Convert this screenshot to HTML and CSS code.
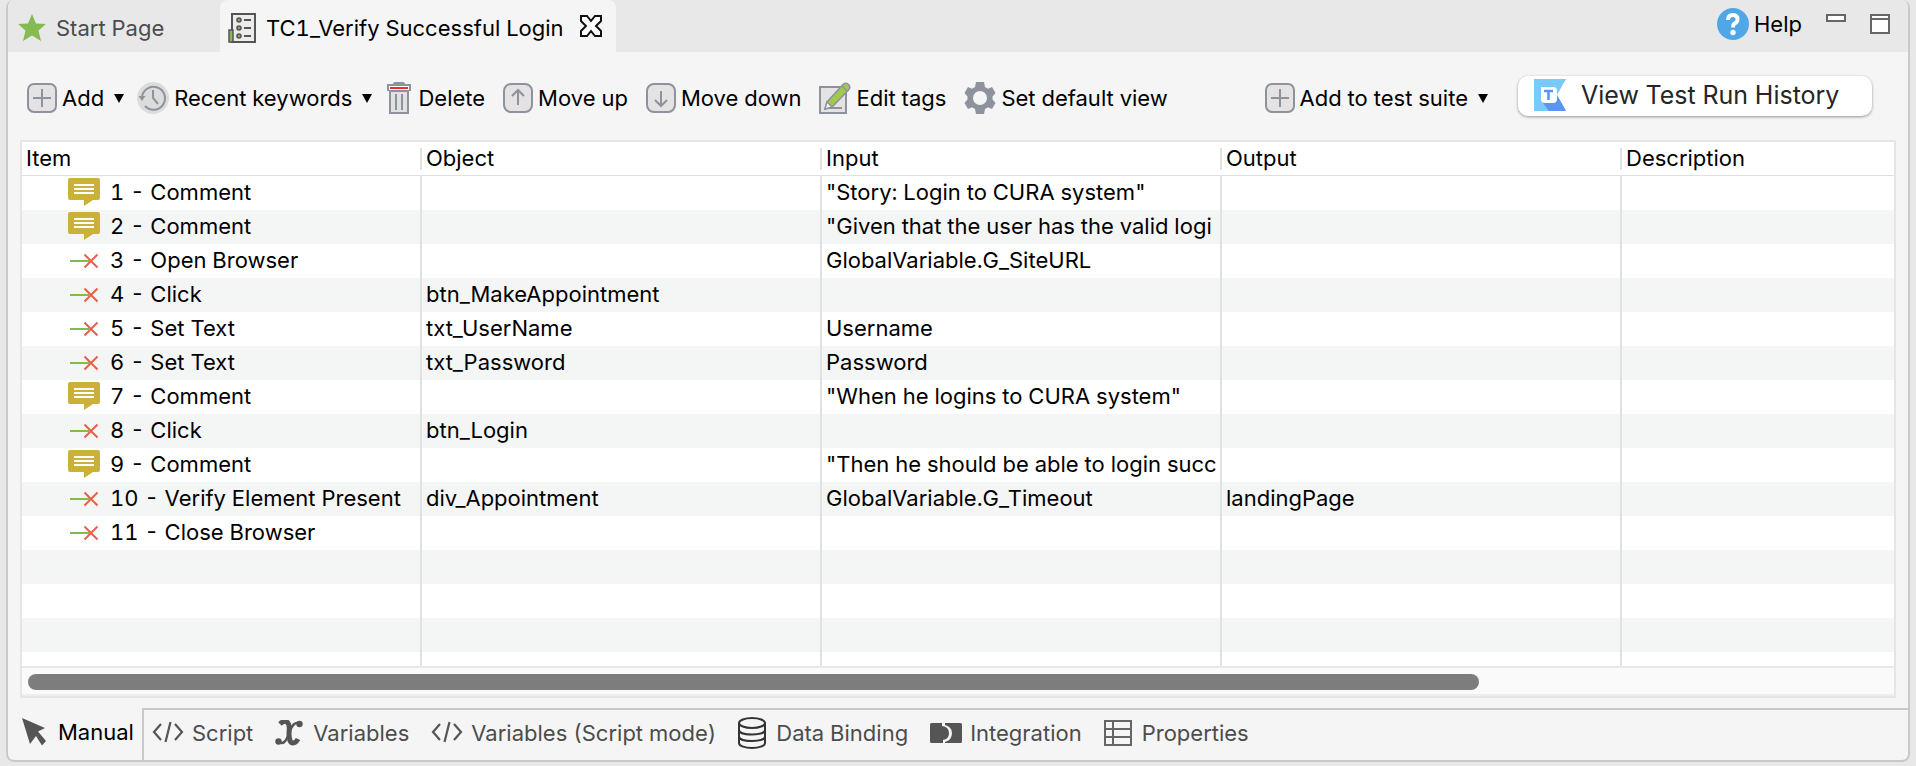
FILE: index.html
```html
<!DOCTYPE html>
<html lang="en">
<head>
<meta charset="utf-8">
<title>TC1_Verify Successful Login</title>
<link rel="stylesheet" href="styles.css">
</head>
<body>
<svg width="0" height="0" class="sprite" aria-hidden="true">
  <symbol id="i-comment" viewBox="0 0 32 28"><path d="M2 0H30Q32 0 32 2V20Q32 22 30 22H25L16 28V22H2Q0 22 0 20V2Q0 0 2 0Z" fill="#cbb039"/><path d="M6 7H26M6 11H26M6 15H26" stroke="#fff" stroke-width="2"/></symbol>
  <symbol id="i-step" viewBox="0 0 32 28"><path d="M2 15H21" stroke="#84bb4f" stroke-width="2"/><path d="M16.500 8.500L29.500 21.500M29.500 8.500L16.500 21.500" stroke="#e8604c" stroke-width="2"/></symbol>
  <symbol id="i-plus" viewBox="0 0 30 30"><rect x="1" y="1" width="28" height="28" rx="6" fill="#e4e2e3" stroke="#8e929d" stroke-width="2"/><path d="M6 15H24M15 6V24" stroke="#8e929d" stroke-width="2"/></symbol>
  <symbol id="i-code" viewBox="0 0 32 24"><path d="M9 3L2 11L9 19M23 3L30 11L23 19M18.500 1L13.500 21" fill="none" stroke="#555" stroke-width="2.200"/></symbol>
</svg>
<main class="editor">
  <header class="tabs">
    <button class="tab tab-start">
      <svg width="28" height="28" viewBox="0 0 28 28"><path d="M14 0L18 9.500L28 10L20.500 16.500L23 27L14 21.500L5 27L7.500 16.500L0 10L10 9.500Z" fill="#86bb51"/></svg>
      <span>Start Page</span>
    </button>
    <button class="tab tab-active">
      <svg width="28" height="30" viewBox="0 0 28 30"><path d="M4 1H27V29H4Z" fill="#ececec" stroke="#555" stroke-width="2"/><path d="M1 17H5V29H1Z" fill="#86bb51" stroke="#555" stroke-width="1.500"/><g fill="#84ad5c" stroke="#555" stroke-width="1.600"><circle cx="11" cy="7" r="2"/><circle cx="11" cy="15" r="2"/><circle cx="11" cy="23" r="2"/></g><path d="M16 7H23M16 15H23M16 23H23" stroke="#555" stroke-width="2"/></svg>
      <span>TC1_Verify Successful Login</span>
      <svg class="close" width="22" height="22" viewBox="0 0 22 22"><path d="M1 1H7L11 6L15 1H21V6L16 11L21 16V21H15L11 16L7 21H1V16L6 11L1 6Z" fill="#fff" stroke="#111" stroke-width="2"/></svg>
    </button>
    <div class="window-tools">
      <button class="tool help"><svg width="32" height="32" viewBox="0 0 32 32"><circle cx="16" cy="16" r="16" fill="#4fa7e8"/><path d="M11 12Q11 7 16 7Q20.500 7 20.500 11.500Q20.500 14 17.500 15.500Q16 16.500 16 19.500" fill="none" stroke="#fff" stroke-width="4"/><circle cx="16" cy="24.500" r="2.700" fill="#fff"/></svg>Help</button>
      <button class="tool" aria-label="Minimize"><svg width="20" height="20" viewBox="0 0 20 20"><rect x="1" y="1" width="18" height="6" fill="#fff" stroke="#666" stroke-width="2"/></svg></button>
      <button class="tool" aria-label="Maximize"><svg width="20" height="20" viewBox="0 0 20 20"><path d="M1 1H19V19H1ZM1 5H19" fill="#fff" stroke="#666" stroke-width="2"/></svg></button>
    </div>
  </header>
  <nav class="toolbar" aria-label="Test case">
    <button class="tool"><svg width="30" height="30"><use href="#i-plus"/></svg>Add<i class="caret"></i></button>
    <button class="tool"><svg width="32" height="32" viewBox="0 0 32 32"><circle cx="16" cy="16" r="16" fill="#dcdcdc"/><path d="M5 16A11.500 11.500 0 1 1 8 24" fill="none" stroke="#8e929d" stroke-width="2"/><path d="M1.500 14H8.500L5 19Z" fill="#8e929d"/><path d="M16 8V16L21 22" fill="none" stroke="#8e929d" stroke-width="2"/></svg>Recent keywords<i class="caret"></i></button>
    <button class="tool action"><svg width="28" height="32" viewBox="-2 0 28 32"><path d="M6 2Q6 0 8 0H16Q18 0 18 2H24V9H0V2Z" fill="#8e929d"/><rect x="2" y="4" width="20" height="4" fill="#fff"/><rect x="3" y="5" width="18" height="2" fill="#ee2c2c"/><path d="M3 9H21V31H3Z" fill="#e2e1e2" stroke="#8e929d" stroke-width="2"/><path d="M9 12V28M15 12V28" stroke="#8e929d" stroke-width="2"/></svg>Delete</button>
    <button class="tool action"><svg width="30" height="30" viewBox="0 0 30 30"><rect x="1" y="1" width="28" height="28" rx="7" fill="#e4e2e3" stroke="#8e929d" stroke-width="2"/><path d="M15 22V7M9 13L15 7L21 13" fill="none" stroke="#8e929d" stroke-width="2"/></svg>Move up</button>
    <button class="tool action"><svg width="30" height="30" viewBox="0 0 30 30"><rect x="1" y="1" width="28" height="28" rx="7" fill="#e4e2e3" stroke="#8e929d" stroke-width="2"/><path d="M15 8V23M9 17L15 23L21 17" fill="none" stroke="#8e929d" stroke-width="2"/></svg>Move down</button>
    <button class="tool action"><svg width="32" height="32" viewBox="0 0 32 32"><path d="M1 5H27V31H1Z" fill="#e4e2e3" stroke="#8e929d" stroke-width="2"/><path d="M6 26H23" stroke="#8e929d" stroke-width="2"/><path d="M8 20L24 2.500Q27 0 29.500 2.500Q32 5 29.500 8L13 25L6 27Z" fill="#a2c94e" stroke="#8e929d" stroke-width="1.600"/><path d="M8 20L13 25L6 27Z" fill="#fff" stroke="#8e929d" stroke-width="1.400"/><path d="M23 4L28 9" stroke="#8e929d" stroke-width="1.600"/></svg>Edit tags</button>
    <button class="tool action"><svg width="32" height="32" viewBox="0 0 32 32"><path fill-rule="evenodd" fill="#8e929d" d="M12 0H20L21 5L24 6.800L28 5L31.500 11L28.500 14.500V17.500L31.500 21L28 27L24 25.200L21 27L20 32H12L11 27L8 25.200L4 27L0.500 21L3.500 17.500V14.500L0.500 11L4 5L8 6.800L11 5ZM16 9A7 7 0 1 0 16 23A7 7 0 1 0 16 9Z"/></svg>Set default view</button>
    <button class="tool tool-suite"><svg width="30" height="30"><use href="#i-plus"/></svg>Add to test suite<i class="caret"></i></button>
    <button class="history"><svg width="32" height="32" viewBox="0 0 32 32"><path d="M0 0H32L23 16L32 32H0Z" fill="#78cafa"/><path d="M9 24L23 16L32 32H15Z" fill="#5b93f7"/><path d="M7 8H19Q23 8 23 12V20Q23 24 19 24H11Q7 24 7 20Z" fill="#fff"/><path d="M10 12H19M14.500 12V21" stroke="#5b93f7" stroke-width="2.600"/></svg>View Test Run History</button>
  </nav>
  <section class="grid">
    <div class="viewport">
      <table>
        <colgroup><col class="c-item"><col class="c-mid"><col class="c-mid"><col class="c-mid"><col></colgroup>
        <thead><tr><th>Item</th><th>Object</th><th>Input</th><th>Output</th><th>Description</th></tr></thead>
        <tbody>
          <tr><td class="item"><svg><use href="#i-comment"/></svg>1 - Comment</td><td></td><td>"Story: Login to CURA system"</td><td></td><td></td></tr>
          <tr><td class="item"><svg><use href="#i-comment"/></svg>2 - Comment</td><td></td><td>"Given that the user has the valid logi</td><td></td><td></td></tr>
          <tr><td class="item"><svg><use href="#i-step"/></svg>3 - Open Browser</td><td></td><td>GlobalVariable.G_SiteURL</td><td></td><td></td></tr>
          <tr><td class="item"><svg><use href="#i-step"/></svg>4 - Click</td><td>btn_MakeAppointment</td><td></td><td></td><td></td></tr>
          <tr><td class="item"><svg><use href="#i-step"/></svg>5 - Set Text</td><td>txt_UserName</td><td>Username</td><td></td><td></td></tr>
          <tr><td class="item"><svg><use href="#i-step"/></svg>6 - Set Text</td><td>txt_Password</td><td>Password</td><td></td><td></td></tr>
          <tr><td class="item"><svg><use href="#i-comment"/></svg>7 - Comment</td><td></td><td>"When he logins to CURA system"</td><td></td><td></td></tr>
          <tr><td class="item"><svg><use href="#i-step"/></svg>8 - Click</td><td>btn_Login</td><td></td><td></td><td></td></tr>
          <tr><td class="item"><svg><use href="#i-comment"/></svg>9 - Comment</td><td></td><td>"Then he should be able to login succ</td><td></td><td></td></tr>
          <tr><td class="item"><svg><use href="#i-step"/></svg>10 - Verify Element Present</td><td>div_Appointment</td><td>GlobalVariable.G_Timeout</td><td>landingPage</td><td></td></tr>
          <tr><td class="item"><svg><use href="#i-step"/></svg>11 - Close Browser</td><td></td><td></td><td></td><td></td></tr>
          <tr><td></td><td></td><td></td><td></td><td></td></tr>
          <tr><td></td><td></td><td></td><td></td><td></td></tr>
          <tr><td></td><td></td><td></td><td></td><td></td></tr>
          <tr><td></td><td></td><td></td><td></td><td></td></tr>
        </tbody>
      </table>
    </div>
    <div class="scrollbar"><div class="thumb"></div></div>
  </section>
  <footer class="views">
    <button class="view view-active"><svg width="26" height="30" viewBox="0 0 26 30"><path d="M0 1L23 11L16 14.500L24 24L20 28.500L14 19L8 27Z" fill="#555"/></svg>Manual</button>
    <div class="view-list">
      <button class="view"><svg class="wide" width="32" height="24"><use href="#i-code"/></svg>Script</button>
      <button class="view"><svg width="28" height="26" viewBox="0 0 28 26"><path d="M5 4Q9 0 12 2Q15 4 14 13Q14 23 18 23Q21 23 23 19" fill="none" stroke="#555" stroke-width="5"/><path d="M24 4Q19 0 14 13Q10 26 4 22" fill="none" stroke="#555" stroke-width="2.500"/><circle cx="24.500" cy="4" r="3.200" fill="#555"/><circle cx="3.500" cy="21.500" r="3.200" fill="#555"/></svg>Variables</button>
      <button class="view"><svg class="wide" width="32" height="24"><use href="#i-code"/></svg>Variables (Script mode)</button>
      <button class="view"><svg width="28" height="32" viewBox="0 0 28 32"><g fill="none" stroke="#333" stroke-width="2"><ellipse cx="14" cy="6" rx="13" ry="5"/><path d="M1 6V26C1 32.500 27 32.500 27 26V6M1 13C1 19 27 19 27 13M1 19.500C1 25.500 27 25.500 27 19.500"/></g></svg>Data Binding</button>
      <button class="view"><svg class="wide" width="32" height="20" viewBox="0 0 32 20"><path d="M1.500 0H12V3Q19 4 19 10Q19 16 13 17V20H1.500Q0 20 0 18.500V1.500Q0 0 1.500 0Z" fill="#555"/><path d="M15 0H30.500Q32 0 32 1.500V18.500Q32 20 30.500 20H15V19Q22 17 22 10Q22 4 15 2Z" fill="#555"/></svg>Integration</button>
      <button class="view"><svg width="28" height="26" viewBox="0 0 28 26"><path d="M1 1H27V25H1ZM1 9H27M1 17H27M9 1V25" fill="none" stroke="#666" stroke-width="2"/></svg>Properties</button>
    </div>
  </footer>
</main>
</body>
</html>
```
FILE: styles.css
```css
* { box-sizing: border-box; }
body {
  margin: 0;
  min-height: 100vh;
  padding: 0 6px 4px;
  display: flex;
  background: #e8e8e8;
  color: #000;
  font: 22px/34px Inter, "Liberation Sans", sans-serif;
  font-variant-numeric: tabular-nums;
}
.sprite { position: absolute; }
svg { flex: none; }
button {
  display: flex;
  align-items: center;
  border: 0;
  padding: 0;
  background: none;
  color: inherit;
  font: inherit;
  white-space: nowrap;
}
.editor {
  flex: 1;
  min-width: 0;
  display: flex;
  flex-direction: column;
  border: 2px solid #c9c9c9;
  border-top: 0;
  border-radius: 8px;
  background: #f5f5f5;
}
.tabs {
  display: flex;
  height: 52px;
  background: #e8e8e8;
  border-radius: 8px 8px 0 0;
}
.tab-start { width: 212px; padding: 3px 0 0 10px; gap: 10px; color: #4c4c4c; }
.tab-active { width: 396px; padding: 3px 14px 0 8px; gap: 10px; background: #f5f5f5; border-radius: 8px 8px 0 0; }
.close { margin: 0 0 4px auto; }
.window-tools { display: flex; align-items: center; margin-left: auto; padding: 0 18px 4px 0; gap: 24px; }
.tool { gap: 5px; }
.toolbar { display: flex; align-items: center; height: 88px; padding: 4px 36px 0 19px; gap: 13px; }
.action { margin-right: 5px; }
.caret { margin-left: 5px; border: 5px solid transparent; border-top: 9px solid #000; border-bottom: 0; }
.tool-suite { margin-left: auto; margin-right: 17px; }
.history {
  height: 40px;
  width: 354px;
  padding: 0 0 2px 16px;
  margin-bottom: 4px;
  gap: 15px;
  border-radius: 10px;
  background: #fff;
  box-shadow: 0 1px 3px #0006;
  color: #262626;
  font-size: 25px;
}
.grid {
  flex: 1;
  display: flex;
  flex-direction: column;
  margin: 0 12px 10px;
  border: 2px solid #e5e5e5;
}
.viewport { flex: 1 1 0; min-height: 0; overflow: hidden; background: #fff; }
table { width: 100%; table-layout: fixed; border-collapse: separate; border-spacing: 0; }
.c-item, .c-mid { width: 400px; }
th, td {
  height: 34px;
  padding: 0 0 2px 4px;
  overflow: hidden;
  text-align: left;
  font-weight: 400;
  line-height: 28px;
  white-space: nowrap;
  border-right: 2px solid #e0e1e1;
}
th {
  border-right: 0;
  border-bottom: 1px solid #e0e0e0;
  background: linear-gradient(#e0e1e1, #e0e1e1) right 6px / 2px 22px no-repeat;
}
th:last-child { background: none; }
td:last-child { border-right: 0; }
tbody tr:nth-child(even) { background: #f4f5f5; }
.item { padding-left: 46px; }
.item svg { width: 32px; height: 28px; margin-right: 10px; vertical-align: top; }
.scrollbar { height: 30px; padding: 6px; border-top: 2px solid #e8e8e8; border-bottom: 2px solid #eee; background: #fafafa; }
.thumb { width: 78%; height: 16px; border-radius: 8px; background: #7d7d7d; }
.views { display: flex; height: 52px; color: #4c4c4c; }
.view { gap: 10px; padding-bottom: 5px; }
.view-active { width: 134px; padding-left: 14px; color: #000; }
.view-list { flex: 1; display: flex; gap: 22px; padding-left: 8px; border: 2px solid #c9c9c9; border-width: 2px 0 0 2px; }
.wide { margin-right: -2px; }
```
